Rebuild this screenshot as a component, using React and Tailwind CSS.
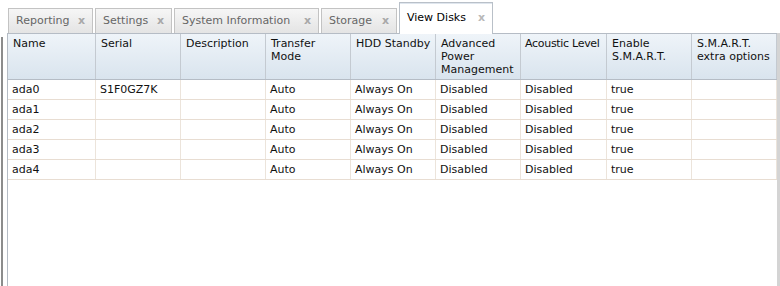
import React from "react";

const tabs = [
  { label: "Reporting", w: "w-[85px]" },
  { label: "Settings", w: "w-[77px]" },
  { label: "System Information", w: "w-[145px]" },
  { label: "Storage", w: "w-[76px]" },
  { label: "View Disks", w: "w-[94px]", active: true },
];

const headers = [
  "Name",
  "Serial",
  "Description",
  "Transfer Mode",
  "HDD Standby",
  "Advanced Power Management",
  "Acoustic Level",
  "Enable S.M.A.R.T.",
  "S.M.A.R.T. extra options",
];

const rows = ["ada0", "ada1", "ada2", "ada3", "ada4"].map((n, i) => [
  n,
  i === 0 ? "S1F0GZ7K" : "",
  "",
  "Auto",
  "Always On",
  "Disabled",
  "Disabled",
  "true",
  "",
]);

const cols = "grid grid-cols-[88px_85px_85px_85px_85px_85px_86px_85px_85px]";

function Tab({ label, w, active }) {
  if (active) {
    return (
      <div
        className={`${w} h-[32px] flex items-center justify-between pl-[7px] pr-[7px] pb-[2px] bg-white border border-[#b9c0c8] border-b-0 text-black relative z-10 -mb-[1px] shadow-[inset_0_1px_0_#dfe6ee]`}
      >
        <span>{label}</span>
        <span className="text-[#b8b8b8] font-bold text-[11px]">x</span>
      </div>
    );
  }
  return (
    <div
      className={`${w} h-[25px] flex items-center justify-between pl-[7px] pr-[7px] pb-[1px] bg-gradient-to-b from-[#f6f6f6] to-[#e4e4e4] border border-[#c3c3c3] border-b-0 text-[#666666]`}
    >
      <span>{label}</span>
      <span className="text-[#a8a8a8] font-bold text-[11px]">x</span>
    </div>
  );
}

export default function App() {
  return (
    <div
      className="w-[780px] h-[286px] bg-white overflow-hidden flex text-[11px] leading-[13px]"
      style={{ fontFamily: '"DejaVu Sans", Verdana, sans-serif' }}
    >
      <div className="w-[7px] pt-[37px] flex">
        <div className="ml-[1px] w-[2px] bg-[#8c8c8c] h-full" />
      </div>
      <div className="w-[770px] flex flex-col">
        <div className="h-[33px] flex items-end gap-[2px] pl-[1px]">
          {tabs.map((t) => (
            <Tab key={t.label} {...t} />
          ))}
        </div>
        <div className="flex-1 border-l border-t border-[#b5bcc5] flex flex-col">
          <div className={`${cols} h-[46px] bg-gradient-to-b from-[#eff4f9] to-[#d9e4ee] border-b border-[#b5bcc5]`}>
            {headers.map((h, i) => (
              <div
                key={i}
                className={`pt-[3px] text-[#111] border-r border-[#c4cad1] ${i === 6 ? "pl-[4px] whitespace-nowrap tracking-[-0.3px] pr-0" : "pl-[5px] pr-[3px]"}`}
              >
                {h}
              </div>
            ))}
          </div>
          {rows.map((r, ri) => (
            <div key={ri} className={`${cols} h-[20px] border-b border-[#e8ddd2]`}>
              {r.map((c, ci) => (
                <div
                  key={ci}
                  className="pl-[4px] pt-[3px] text-[#111] border-r border-[#ece4db] whitespace-nowrap"
                >
                  {c}
                </div>
              ))}
            </div>
          ))}
        </div>
      </div>
      <div className="w-[3px] pt-[33px] flex">
        <div className="w-full h-full bg-[#d4d4d4]" />
      </div>
    </div>
  );
}
